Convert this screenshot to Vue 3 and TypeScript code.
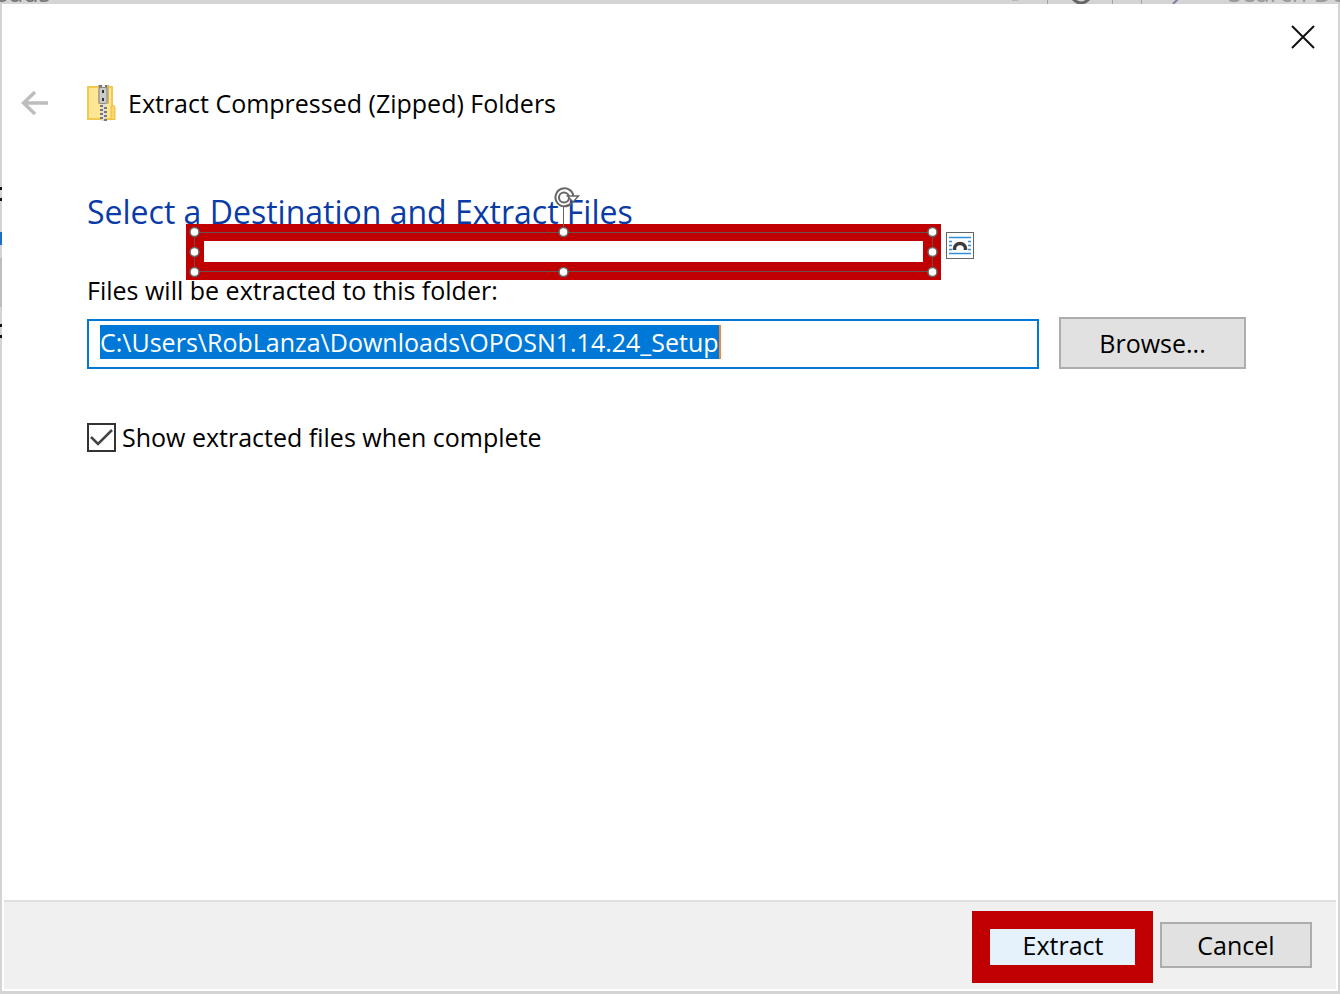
<script setup lang="ts">
import { nextTick, onMounted, ref } from 'vue'

const destination = ref('C:\\Users\\RobLanza\\Downloads\\OPOSN1.14.24_Setup')
const showFiles = ref(true)
const pathInput = ref<HTMLInputElement | null>(null)
const caretLeft = ref(0)

interface Handle {
  x: number
  y: number
}

const handles: Handle[] = [
  { x: 9, y: 40 },
  { x: 378, y: 40 },
  { x: 747, y: 40 },
  { x: 9, y: 60 },
  { x: 747, y: 60 },
  { x: 9, y: 80 },
  { x: 378, y: 80 },
  { x: 747, y: 80 },
]

// The caret sits right after the last selected character.
function placeCaret(input: HTMLInputElement): void {
  const style = getComputedStyle(input)
  const context = document.createElement('canvas').getContext('2d')
  if (!context) return
  context.font = `${style.fontWeight} ${style.fontSize} ${style.fontFamily}`
  const inset = parseFloat(style.paddingLeft) + parseFloat(style.borderLeftWidth)
  caretLeft.value = Math.round(inset + context.measureText(destination.value).width)
}

onMounted(async () => {
  await nextTick()
  if (!pathInput.value) return
  pathInput.value.focus()
  pathInput.value.select()
  placeCaret(pathInput.value)
})
</script>

<template>
  <div class="desktop">
    <div class="explorer" aria-hidden="true">
      <span class="crumb">Downloads</span>
      <svg class="tools" width="180" height="6" viewBox="0 0 180 6">
        <path d="M12 0h6" stroke="#999" stroke-width="1" />
        <path d="M47.500 0v5M112.500 0v5M141.500 0v5" stroke="#a4a4a4" />
        <path d="M73 -1q8 8 16 0" fill="none" stroke="#666" stroke-width="3" />
        <path d="M173 4l5-5" stroke="#8a7aa8" stroke-width="2" />
      </svg>
      <span class="search">Search Downloads</span>
      <svg class="edge" width="2" height="160" viewBox="0 0 2 160">
        <path d="M0 0h2v3h-2zM0 11h2v3h-2zM0 137h2v3h-2zM0 148h2v3h-2z" fill="#111" />
        <path d="M0 45h2v13h-2z" fill="#1b6fc0" />
        <path d="M0 71h2v49h-2z" fill="#bdbdbd" />
      </svg>
    </div>

    <main class="dialog">
      <div class="titlebar">
        <button class="close" type="button" aria-label="Close">
          <svg width="24" height="24" viewBox="0 0 24 24">
            <path d="M1 1l22 22M23 1L1 23" stroke="#111" stroke-width="2" />
          </svg>
        </button>
      </div>

      <header class="header">
        <button class="back" type="button" aria-label="Back" disabled>
          <svg width="28" height="26" viewBox="0 0 28 26">
            <path d="M27 13H2M14 2L2.500 13L14 24" fill="none" stroke="#bdbdbd" stroke-width="3.500" />
          </svg>
        </button>
        <svg class="zip" width="30" height="36" viewBox="0 0 30 36">
          <path d="M1 1h26v19l2 1v14H1z" fill="#f0c94f" />
          <path d="M3 3h22v30H3z" fill="#ffe694" />
          <path d="M25 21.500l2-1 2 1v13h-4z" fill="#fbd866" stroke="#e9bd43" />
          <path d="M12 0h11v19h-11z" fill="#d9b768" />
          <path d="M13 0h8v3h-8z" fill="#777" />
          <path d="M16 0h3v2h-3z" fill="#eee" />
          <rect x="13" y="2.500" width="8" height="16" rx="2" fill="#c9cbcd" stroke="#8c8c8c" />
          <path d="M16 5h2v3h-2zM16 13h2v3h-2z" fill="#333" />
          <path d="M15 19h5v17h-5z" fill="#dedede" />
          <path d="M14 20h3v2h-3zM18 22h3v2h-3zM14 24h3v2h-3zM18 26h3v2h-3zM14 28h3v2h-3zM18 30h3v2h-3zM14 32h3v2h-3zM18 34h3v2h-3z" fill="#777" />
        </svg>
        <span class="caption">Extract Compressed (Zipped) Folders</span>
      </header>

      <section class="content">
        <div class="intro">
          <h1 class="title">Select a Destination and Extract Files</h1>
          <svg class="shape" width="790" height="90" viewBox="0 0 790 90">
            <path d="M1 32h755v56H1zM19 49v21h719V49z" fill="#c00000" fill-rule="evenodd" />
            <path d="M9.500 40.500h738v39H9.500z" fill="none" stroke="#6b5050" />
            <path d="M378.500 15v25" stroke="#666" />
            <g fill="none" stroke="#666" stroke-width="2">
              <circle cx="379" cy="5.500" r="5" />
              <path d="M386.500 11a9 9 0 1 1 2-6" />
            </g>
            <path d="M382.500 4h11l-5.500 6z" fill="#fff" stroke="#666" stroke-width="1.500" />
            <circle v-for="(h, i) in handles" :key="i" :cx="h.x + 0.500" :cy="h.y" r="4.500" fill="#fff" stroke="#666" stroke-width="1.500" />
            <rect x="761.500" y="40.500" width="27" height="26" fill="#fff" stroke="#666" />
            <path d="M764 45.500h22M764 49.500h3M783 49.500h3M764 53.500h3M783 53.500h3M764 57.500h3M783 57.500h3M764 61.500h22" stroke="#2f90e0" stroke-width="1.500" />
            <path d="M769.500 58v-1a5.500 5.500 0 0 1 11 0v1" fill="none" stroke="#3c3c3c" stroke-width="3.500" />
          </svg>
        </div>

        <label class="label" for="destination">Files will be extracted to this folder:</label>
        <div class="field-row">
          <div class="field">
            <input id="destination" ref="pathInput" v-model="destination" class="path" type="text" spellcheck="false" />
            <span class="caret" :style="{ left: caretLeft + 'px' }"></span>
          </div>
          <button class="button browse" type="button">Browse...</button>
        </div>

        <div class="option">
          <input id="show-files" v-model="showFiles" class="check" type="checkbox" />
          <label for="show-files">Show extracted files when complete</label>
        </div>
      </section>

      <footer class="footer">
        <button class="button extract" type="button">Extract</button>
        <button class="button" type="button">Cancel</button>
      </footer>
    </main>
  </div>
</template>

<style>
body {
  margin: 0;
}
</style>

<style scoped>
.desktop {
  position: relative;
  box-sizing: border-box;
  display: flex;
  min-height: 100vh;
  padding: 4px 2px 3px;
  overflow: hidden;
  background: #d4d4d4;
  font-family: "Open Sans", "Noto Sans", sans-serif;
  font-size: 25px;
  line-height: 32px;
  color: #000;
}

.explorer {
  position: absolute;
  inset: 0;
  color: #777;
  white-space: nowrap;
}

.crumb {
  position: absolute;
  left: -80px;
  top: -24px;
}

.tools {
  position: absolute;
  right: 160px;
  top: 0;
}

.search {
  position: absolute;
  left: calc(100% - 112px);
  top: -24px;
  color: #999;
}

.edge {
  position: absolute;
  left: 0;
  top: 187px;
}

.dialog {
  position: relative;
  box-sizing: border-box;
  display: flex;
  flex: 1;
  flex-direction: column;
  min-width: 0;
  padding: 0 2px 2px;
  background: #fff;
}

.titlebar {
  display: flex;
  justify-content: flex-end;
  padding: 16px 16px 0 0;
}

.close,
.back {
  display: flex;
  align-items: center;
  justify-content: center;
  padding: 0;
  border: 0;
  background: none;
}

.close {
  width: 34px;
  height: 34px;
}

.header {
  display: flex;
  align-items: center;
  height: 40px;
  margin-top: 29px;
  padding-left: 17px;
}

.zip {
  margin-left: 37px;
}

.caption {
  margin-left: 12px;
}

.content {
  flex: 1;
  padding: 65px 90px 0 83px;
}

.intro {
  position: relative;
}

.title {
  margin: 0;
  font-size: 32px;
  font-weight: 400;
  line-height: 48px;
  color: #0a3ba6;
}

.shape {
  position: absolute;
  left: 98px;
  top: 4px;
  overflow: visible;
}

.label {
  display: block;
  margin-top: 38px;
}

.field-row {
  display: flex;
  align-items: flex-end;
  gap: 20px;
  margin-top: 11px;
}

.field {
  position: relative;
  flex: 1;
  min-width: 0;
}

.path {
  display: block;
  box-sizing: border-box;
  width: 100%;
  height: 50px;
  padding: 0 11px 4px;
  border: 2px solid #0078d7;
  border-radius: 0;
  outline: 0;
  background: #fff;
  color: #000;
  font: inherit;
}

.path::selection {
  background: #0078d7;
  color: #fff;
}

.caret {
  position: absolute;
  top: 6px;
  width: 2px;
  height: 34px;
  background: #f0883a;
}

.button {
  box-sizing: border-box;
  width: 152px;
  height: 46px;
  padding: 0;
  border: 2px solid #adadad;
  background: #e1e1e1;
  color: #000;
  font: inherit;
}

.browse {
  width: 187px;
  height: 52px;
}

.option {
  display: flex;
  align-items: center;
  gap: 6px;
  margin-top: 52px;
}

.check {
  appearance: none;
  width: 29px;
  height: 29px;
  margin: 0;
  border: 2px solid #333;
  background: #fff;
}

.check:checked {
  background: #fff url("data:image/svg+xml,%3Csvg xmlns='http://www.w3.org/2000/svg' viewBox='0 0 25 25'%3E%3Cpath d='M2 12l7 7L23 5' fill='none' stroke='%23444' stroke-width='2.500'/%3E%3C/svg%3E") center / 25px 25px no-repeat;
}

.footer {
  display: flex;
  justify-content: flex-end;
  gap: 21px;
  padding: 20px 24px 21px;
  border-top: 2px solid #dfdfdf;
  background: #f0f0f0;
}

.extract {
  position: relative;
  border-color: #0078d7;
  background: #e5f1fb;
}

.extract::after {
  content: "";
  position: absolute;
  inset: -13px -16px -17px -17px;
  border: 18px solid #c00000;
}
</style>
